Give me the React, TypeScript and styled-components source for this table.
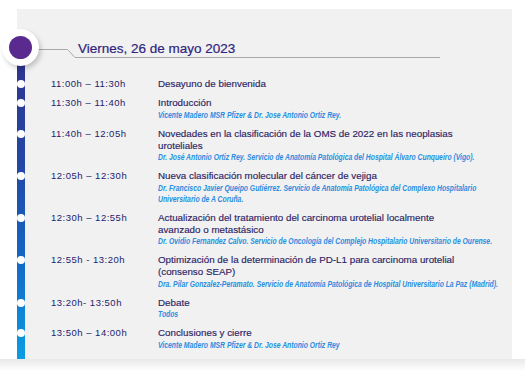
import React from "react";
import styled, { createGlobalStyle } from "styled-components";

const GlobalStyle = createGlobalStyle`
  html, body { margin: 0; padding: 0; background: #ffffff; }
  body {
    width: 525px;
    height: 370px;
    overflow: hidden;
    font-family: "Liberation Sans", Arial, sans-serif;
  }
`;

const Page = styled.div`
  width: 525px;
  height: 370px;
  box-sizing: border-box;
  padding-top: 9px;
  display: flex;
  flex-direction: column;
  overflow: hidden;
`;

const Panel = styled.section`
  position: relative;
  margin-left: 17px;
  width: 495px;
  height: 350px;
  flex: none;
  background: #f1f1f1;
  display: grid;
  grid-template-rows: 56px 1fr;
`;

const BottomShade = styled.div`
  flex: 1;
  background: linear-gradient(#e9e9e9, #fdfdfd);
`;

const Header = styled.header`
  display: flex;
  align-items: flex-end;
  padding: 0 0 7px 21px;
`;

const Connector = styled.svg`
  display: block;
  flex: none;
`;

const DayTitle = styled.h1`
  margin: 0;
  width: 362px;
  padding-left: 3px;
  border-bottom: 1px solid #a9a9a9;
  font-size: 13.5px;
  line-height: 16px;
  font-weight: normal;
  color: #30257c;
  -webkit-text-stroke: 0.2px #30257c;
`;

const Halo = styled.div`
  position: absolute;
  left: -15px;
  top: 20px;
  width: 37px;
  height: 37px;
  border-radius: 50%;
  background: #ffffff;
  box-shadow: 2px 3px 5px rgba(0, 0, 0, 0.2);
  display: flex;
  align-items: center;
  justify-content: center;
`;

const Dot = styled.div`
  width: 23px;
  height: 23px;
  border-radius: 50%;
  background: #5a2a8e;
`;

const Body = styled.div`
  display: grid;
  grid-template-columns: 8px 1fr;
  min-height: 0;
`;

const Rail = styled.div`
  background: linear-gradient(#2e368f 0%, #2348a6 35%, #1466c4 65%, #0a9de3 100%);
`;

const List = styled.ol`
  list-style: none;
  margin: 0;
  padding: 13px 0 0 26px;
  display: flex;
  flex-direction: column;
  gap: 7px;
  min-width: 0;
`;

const Row = styled.li`
  position: relative;
  display: grid;
  grid-template-columns: 107px 354px;

  &::before {
    content: "";
    position: absolute;
    left: -34px;
    top: 2px;
    width: 8px;
    height: 8px;
    border-radius: 50%;
    background: #ffffff;
  }
`;

const Time = styled.div`
  font-size: 9.5px;
  line-height: 12px;
  letter-spacing: 0.5px;
  color: #1d1c6c;
`;

const Content = styled.div`
  display: flex;
  flex-direction: column;
  min-width: 0;
`;

const Title = styled.div`
  max-width: 312px;
  font-size: 9.8px;
  line-height: 12px;
  color: #2c2363;
  -webkit-text-stroke: 0.15px #2c2363;
`;

const Speaker = styled.div`
  margin-top: 0.5px;
  width: 440px;
  transform: scaleX(0.8);
  transform-origin: 0 0;
  font-style: italic;
  font-weight: bold;
  font-size: 8.5px;
  line-height: 11px;
  color: #2a8de0;
`;

type Item = { time: string; title: string; speaker?: string };

const items: Item[] = [
  { time: "11:00h – 11:30h", title: "Desayuno de bienvenida" },
  {
    time: "11:30h – 11:40h",
    title: "Introducción",
    speaker: "Vicente Madero MSR Pfizer & Dr. Jose Antonio Ortiz Rey.",
  },
  {
    time: "11:40h – 12:05h",
    title: "Novedades en la clasificación de la OMS de 2022 en las neoplasias uroteliales",
    speaker:
      "Dr. José Antonio Ortiz Rey. Servicio de Anatomía Patológica del Hospital Álvaro Cunqueiro (Vigo).",
  },
  {
    time: "12:05h – 12:30h",
    title: "Nueva clasificación molecular del cáncer de vejiga",
    speaker:
      "Dr. Francisco Javier Queipo Gutiérrez. Servicio de Anatomía Patológica del Complexo Hospitalario Universitario de A Coruña.",
  },
  {
    time: "12:30h – 12:55h",
    title: "Actualización del tratamiento del carcinoma urotelial localmente avanzado o metastásico",
    speaker:
      "Dr. Ovidio Fernandez Calvo. Servicio de Oncología del Complejo Hospitalario Universitario de Ourense.",
  },
  {
    time: "12:55h - 13:20h",
    title: "Optimización de la determinación de PD-L1 para carcinoma urotelial (consenso SEAP)",
    speaker:
      "Dra. Pilar Gonzalez-Peramato. Servicio de Anatomía Patológica de Hospital Universitario La Paz (Madrid).",
  },
  { time: "13:20h- 13:50h", title: "Debate", speaker: "Todos" },
  {
    time: "13:50h – 14:00h",
    title: "Conclusiones y cierre",
    speaker: "Vicente Madero MSR Pfizer & Dr. Jose Antonio Ortiz Rey",
  },
];

export default function App() {
  return (
    <Page>
      <GlobalStyle />
      <Panel>
        <Halo>
          <Dot />
        </Halo>
        <Header>
          <Connector width="37" height="10" viewBox="0 0 37 10">
            <polyline
              points="0,1.5 29.5,1.5 37,9.5"
              fill="none"
              stroke="#a9a9a9"
              strokeWidth="1"
            />
          </Connector>
          <DayTitle>Viernes, 26 de mayo 2023</DayTitle>
        </Header>
        <Body>
          <Rail />
          <List>
            {items.map((it) => (
              <Row key={it.time}>
                <Time>{it.time}</Time>
                <Content>
                  <Title>{it.title}</Title>
                  {it.speaker && <Speaker>{it.speaker}</Speaker>}
                </Content>
              </Row>
            ))}
          </List>
        </Body>
      </Panel>
      <BottomShade />
    </Page>
  );
}
